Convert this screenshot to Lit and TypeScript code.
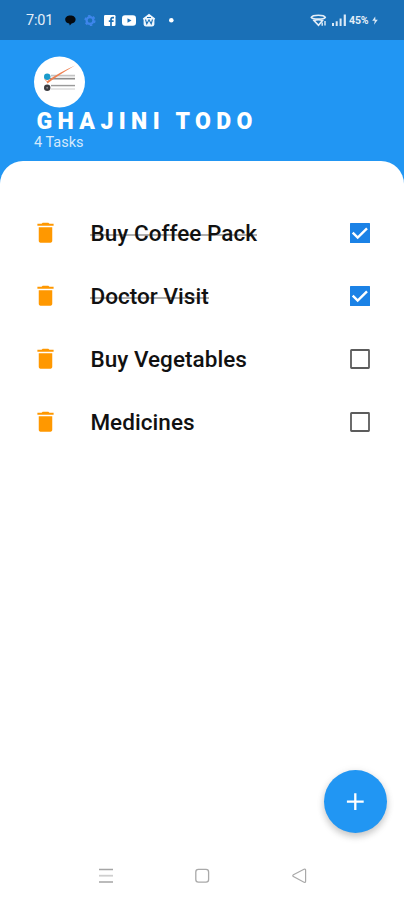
import { LitElement, html, css, svg } from "lit";
import { customElement, property, state } from "lit/decorators.js";

interface Task {
  name: string;
  done: boolean;
}

@customElement("status-bar")
class StatusBar extends LitElement {
  static styles = css`
    :host {
      display: flex;
      align-items: center;
      height: 40px;
      box-sizing: border-box;
      padding: 0 25px 0 26px;
      background: #1a70b7;
      color: #e4eef8;
      font-family: Roboto, sans-serif;
    }
    .time {
      width: 28px;
      padding-top: 2px;
      font-size: 14.500px;
      line-height: 20px;
      letter-spacing: -0.2px;
      white-space: nowrap;
    }
    .left {
      display: block;
      margin-left: 6px;
    }
    .spacer {
      flex: 1;
    }
    .right {
      display: block;
    }
    .battery {
      width: 22px;
      margin-left: 2px;
      font-size: 10.500px;
      font-weight: 700;
      letter-spacing: -0.1px;
      white-space: nowrap;
    }
  `;
  render() {
    return html`
      <span class="time">7:01</span>
      <svg class="left" width="120" height="20" viewBox="60 10 120 20">
        <path d="M65.200 19.500c0-2.500 2.400-4 5.200-4s5.200 1.500 5.200 4c0 2.200-1.700 3.600-4 4l-1.800 2-.6-2c-2.500-.3-4-1.800-4-4z" fill="#050a10" />
        <g fill="none" stroke="#3f86ec">
          <circle cx="90" cy="20.500" r="3.400" stroke-width="2.200" />
          <circle cx="90" cy="20.500" r="4.900" stroke-width="1.400" stroke-dasharray="2.560 2.560" />
        </g>
        <rect x="104" y="15" width="11.500" height="11" rx="1.200" fill="#fff" />
        <path d="M114 17.600h-1.300q-1.700 0-1.700 1.800V26M108.800 21.200h4.800" fill="none" stroke="#1a70b7" stroke-width="1.700" />
        <rect x="122" y="15.300" width="14" height="10.400" rx="3" fill="#fff" />
        <path d="M127.500 18.200v4.600l4-2.300z" fill="#1a70b7" />
        <path d="M149 13.800l6.200 4.700-.8 1.500v4.500q-.3 2-2.400 2h-6q-2.100 0-2.400-2V20l-.8-1.500z" fill="#edf5fc" />
        <path d="M145.500 19.500l1.300 4.300 2.200-4 2.200 4 1.300-4.300M147 17.500h4" fill="none" stroke="#1a70b7" stroke-width="1.100" />
        <circle cx="171.300" cy="20.300" r="2.300" fill="#fff" />
      </svg>
      <span class="spacer"></span>
      <svg class="right" width="37" height="18" viewBox="309 11 37 18">
        <g fill="none" stroke="#e4eef8" stroke-width="1.600">
          <path d="M310.300 17.300q1-2 7-2t7 2q-1 1.800-7 1.800t-7-1.800z" />
          <path d="M313 20.500q4.500-1.500 8.500 0l-4 4.800z" />
          <path d="M321.200 25.700v-3.300M324 21v4.500" stroke-width="1.400" />
        </g>
        <path d="M331 23h2v3h-2zM334.700 21.300h2V26h-2zM338.600 18.500h2V26h-2zM342.700 14.600h2.200V26h-2.200z" fill="#d9e8f6" />
      </svg>
      <span class="battery">45%</span>
      <svg class="right" width="8" height="12" viewBox="0 0 8 12">
        <path d="M4.200 2.500L1.200 6.700h2.600L3 10.800 6.800 5.700H4.400z" fill="#d9e8f6" />
      </svg>
    `;
  }
}

@customElement("task-row")
class TaskRow extends LitElement {
  @property({ attribute: false }) task!: Task;
  static styles = css`
    :host {
      display: flex;
      align-items: center;
      height: 63px;
      padding: 0 34px 0 32px;
      font-family: Roboto, sans-serif;
    }
    svg {
      display: block;
      flex: none;
    }
    .name {
      position: relative;
      z-index: 0;
      margin-left: 31.400px;
      padding-top: 1px;
      font-size: 22.500px;
      line-height: 28px;
      font-weight: 500;
      letter-spacing: 0.050px;
      color: #111;
      white-space: nowrap;
    }
    .done::after {
      content: "";
      position: absolute;
      z-index: -1;
      left: 0;
      right: 0;
      top: 16px;
      height: 2px;
      background: #b0b0b0;
    }
    .spacer {
      flex: 1;
    }
  `;
  render() {
    const { name, done } = this.task;
    return html`
      <svg width="27" height="27" viewBox="0 0 24 24">
        <path d="M6 19.400c0 1 .6 1.600 1.500 1.600h9c.9 0 1.500-.6 1.500-1.600V7.300H6v12.100zM19.200 4.300h-3.700l-1-1h-5l-1 1H4.800V6h14.400V4.300z" fill="#ff9800" />
      </svg>
      <span class="name ${done ? "done" : ""}">${name}</span>
      <span class="spacer"></span>
      <svg width="20" height="20" viewBox="0 0 20 20">
        ${done
          ? svg`<rect width="20" height="20" rx=".5" fill="#1b82e6" /><path d="M2.700 9.600l5 5 9.300-9.300" fill="none" stroke="#fff" stroke-width="2.400" />`
          : svg`<rect x="1" y="1" width="18" height="18" rx=".5" fill="#fff" stroke="#5c5c5c" stroke-width="1.800" />`}
      </svg>
    `;
  }
}

@customElement("app-root")
class AppRoot extends LitElement {
  @state() tasks: Task[] = [
    { name: "Buy Coffee Pack", done: true },
    { name: "Doctor Visit", done: true },
    { name: "Buy Vegetables", done: false },
    { name: "Medicines", done: false },
  ];
  static styles = css`
    :host {
      position: relative;
      display: flex;
      flex-direction: column;
      height: 900px;
      overflow: hidden;
      background: #2196f3;
      font-family: Roboto, sans-serif;
    }
    header {
      height: 121px;
      box-sizing: border-box;
      padding: 16px 34px 0;
      color: #fff;
    }
    .logo {
      display: block;
    }
    h1 {
      margin: 1px 0 0 2.500px;
      font-size: 23px;
      line-height: 25px;
      font-weight: 900;
      letter-spacing: 5.400px;
      white-space: nowrap;
    }
    .count {
      font-size: 14.500px;
      line-height: 17px;
      color: #d3e9fc;
    }
    main {
      flex: 1;
      padding-top: 40px;
      background: #fff;
      border-radius: 23px 23px 0 0;
    }
    .fab {
      position: absolute;
      left: 324px;
      top: 770px;
      width: 63px;
      height: 63px;
      padding: 0;
      border: 0;
      border-radius: 50%;
      background: #2196f3;
      box-shadow: 0 4px 7px rgba(0, 0, 0, 0.180), 0 1px 9px rgba(0, 0, 0, 0.080);
    }
    .fab svg {
      display: block;
    }
    nav {
      display: flex;
      justify-content: space-between;
      height: 50px;
      padding: 0 96px;
      background: #fff;
    }
  `;
  render() {
    return html`
      <status-bar></status-bar>
      <header>
        <svg class="logo" width="51" height="52" viewBox="34 56 51 52">
          <circle cx="59.500" cy="82" r="25.500" fill="#fff" />
          <path d="M51 74.800h24v1.400H51zM51 84.800h24v1.600H51z" fill="#c4c4c4" />
          <path d="M50 76.200h25v1.200H50zM51 88.300h24v1.500H51z" fill="#dedede" />
          <path d="M50 78h25v1.600H50zM51 84.900h24v.8H51z" fill="#8c8c8c" />
          <circle cx="47.200" cy="76.700" r="3.200" fill="#1b9bcb" />
          <circle cx="47.200" cy="87.700" r="3.200" fill="#3c3c40" />
          <circle cx="47.200" cy="87.700" r="1" fill="#85858a" />
          <path d="M44 79.300q2 .2 3 2Q58 73 75 65.500 57 76 47.500 83.500q-1-2.800-3.500-4.200z" fill="#ee8152" />
        </svg>
        <h1>GHAJINI TODO</h1>
        <div class="count">${this.tasks.length} Tasks</div>
      </header>
      <main>${this.tasks.map((t) => html`<task-row .task=${t}></task-row>`)}</main>
      <button class="fab" aria-label="Add task">
        <svg width="63" height="63" viewBox="0 0 63 63">
          <path d="M31.300 23.300v16.700M22.900 31.600h16.800" stroke="#fff" stroke-width="2.300" />
        </svg>
      </button>
      <nav>
        <svg width="20" height="50" viewBox="96 850 20 50">
          <path d="M99 869.500h14M99 882h14" stroke="#a5a5a5" stroke-width="1.400" />
          <path d="M99 875.700h14" stroke="#cfcfcf" stroke-width="1.800" />
        </svg>
        <svg width="20" height="50" viewBox="192.500 850 20 50">
          <rect x="196.300" y="869.300" width="12.800" height="12.800" rx="2.600" fill="none" stroke="#a9a9a9" stroke-width="1.300" />
        </svg>
        <svg width="20" height="50" viewBox="288 850 20 50">
          <path d="M293.400 874.700L304 869.300q1.600-.5 1.600 1v10.900q0 1.500-1.600 1l-10.600-5.600q-1.200-1 0-1.900z" fill="none" stroke="#a9a9a9" stroke-width="1.200" />
        </svg>
      </nav>
    `;
  }
}
